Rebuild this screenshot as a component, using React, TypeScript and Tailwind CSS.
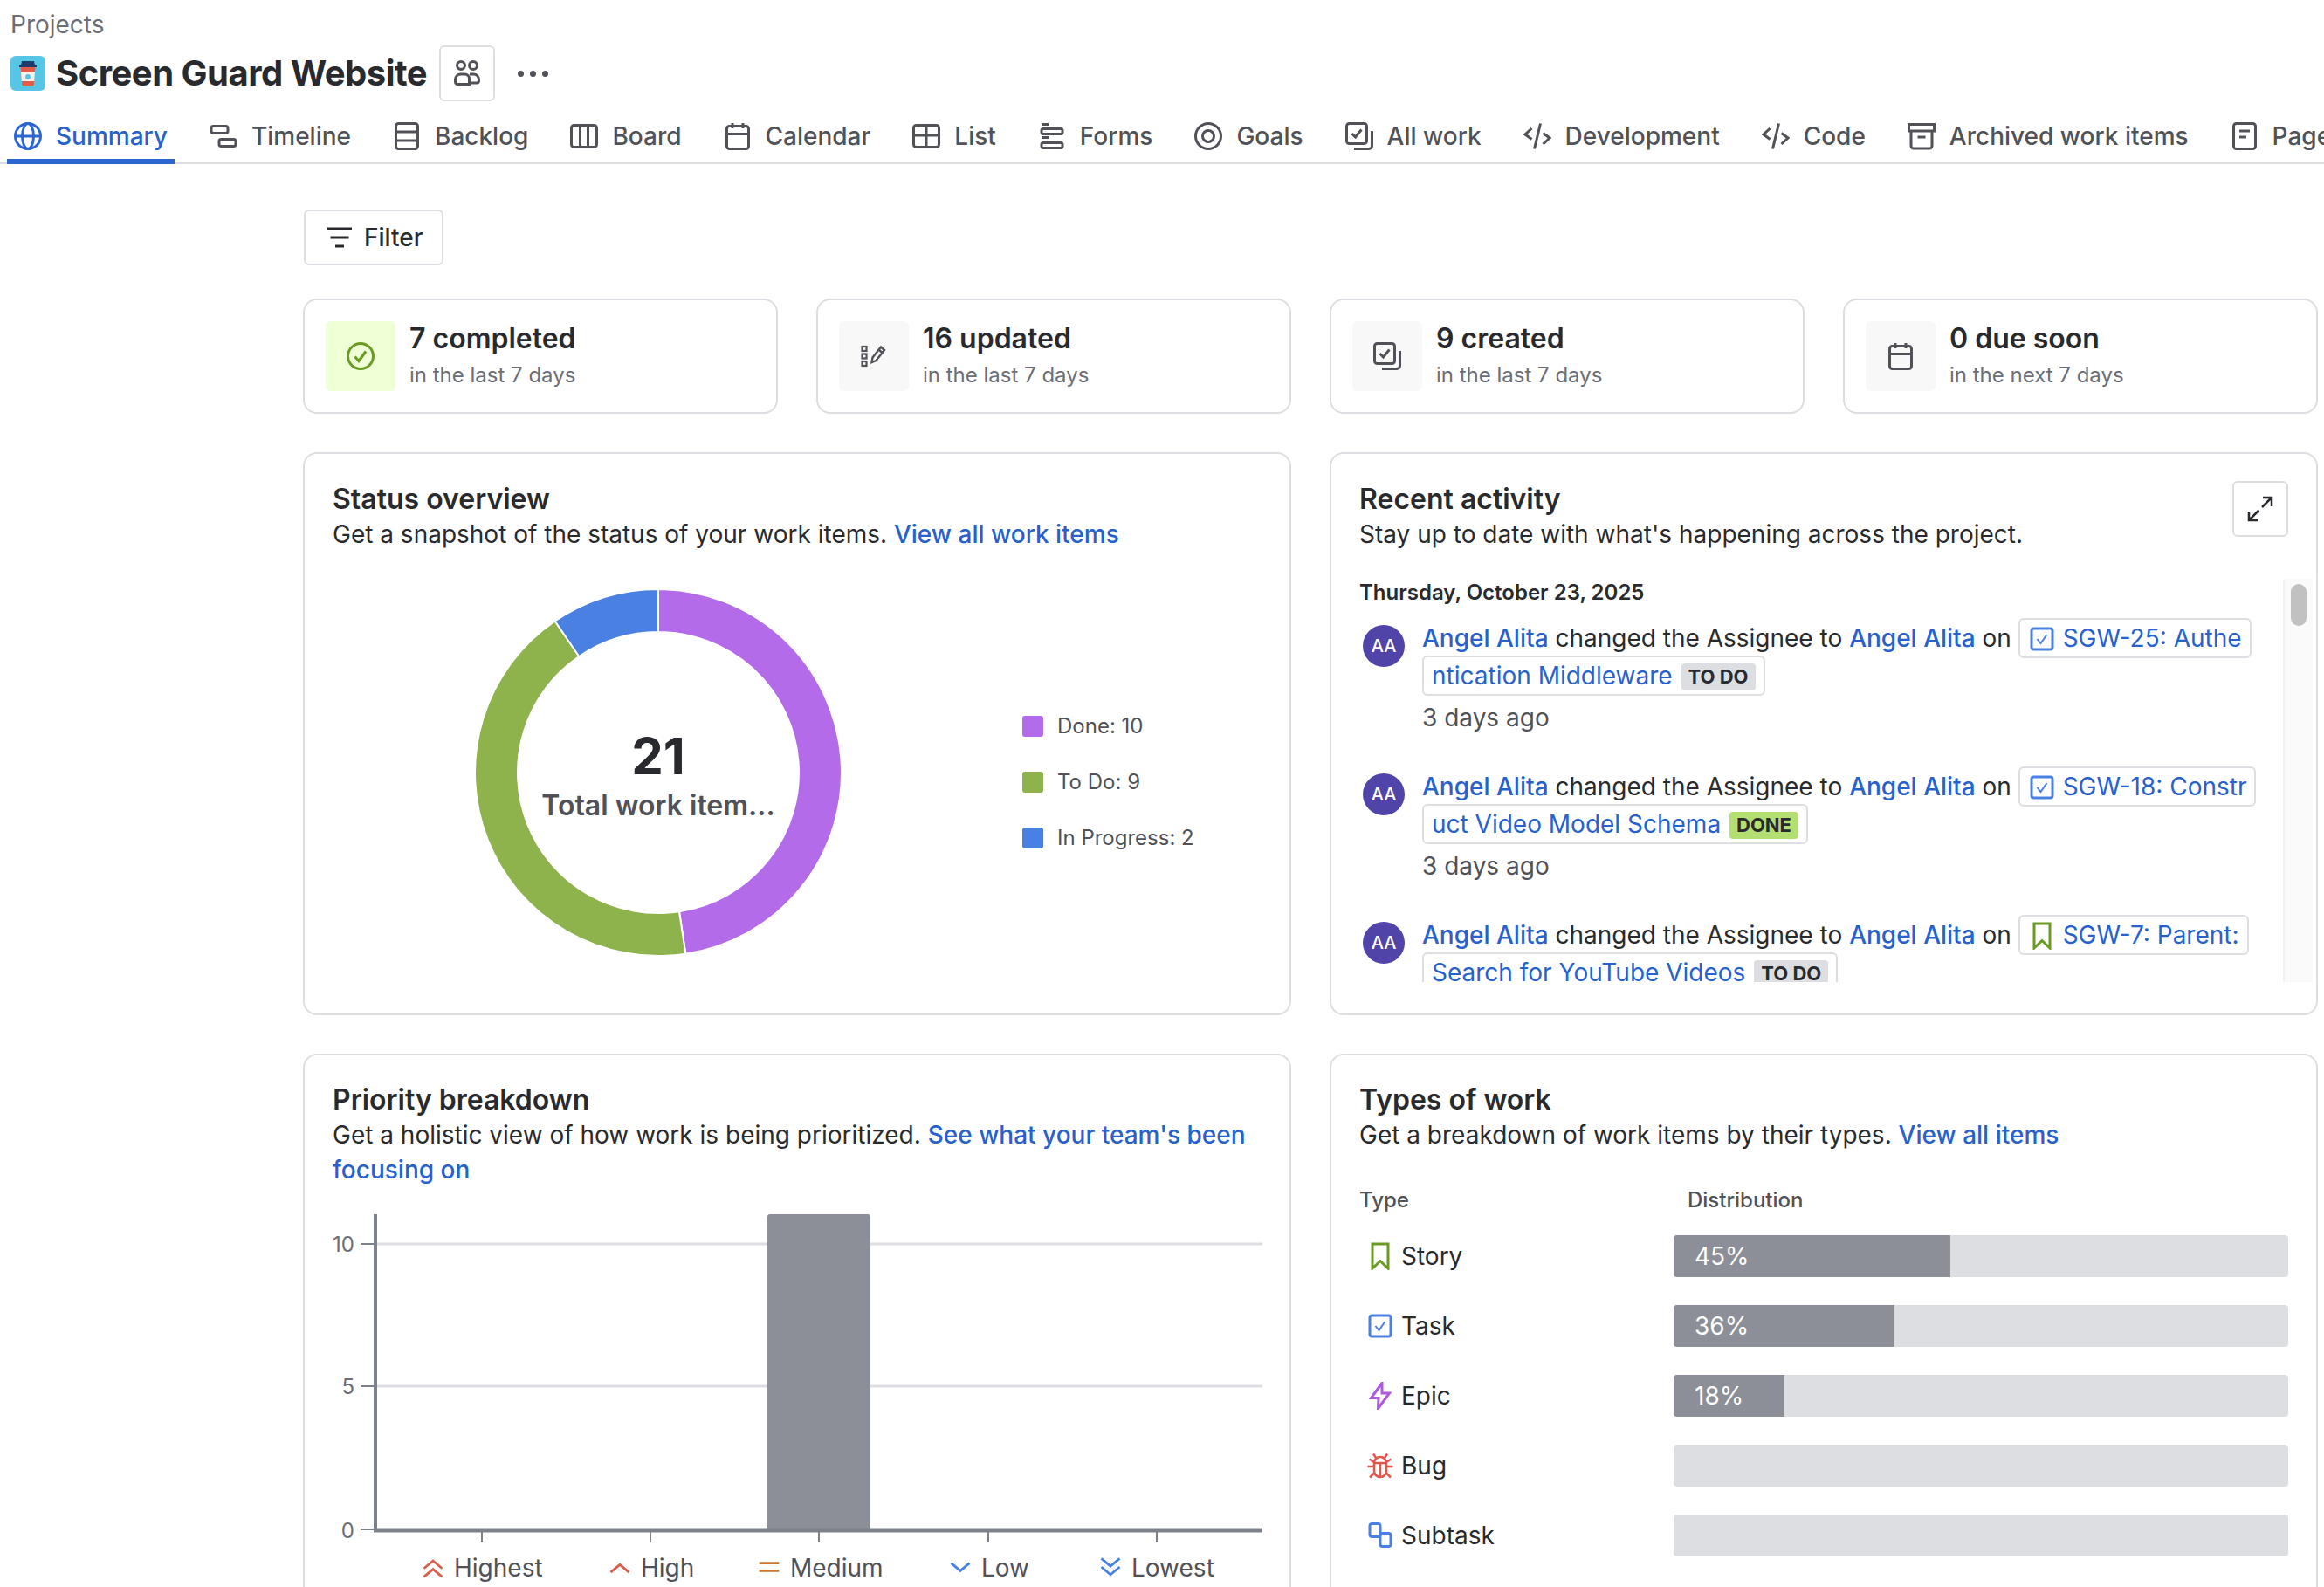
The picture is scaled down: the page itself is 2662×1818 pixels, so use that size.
import type { ReactNode } from "react";

const Ico = ({ children, className = "text-[#505258]", size = 32 }: { children: ReactNode; className?: string; size?: number }) => (
  <svg width={size} height={size} viewBox="0 0 16 16" fill="none" stroke="currentColor" strokeWidth="1.5" className={`shrink-0 ${className}`}>
    {children}
  </svg>
);

const GlobeI = () => (<><circle cx="8" cy="8" r="7.25" /><ellipse cx="8" cy="8" rx="3.25" ry="7.25" /><path d="M.75 8h14.5" /></>);
const TimelineI = () => (<><rect x="1" y="2.25" width="9.5" height="4" rx="1.25" /><rect x="5.5" y="9.75" width="9.5" height="4" rx="1.25" /></>);
const BacklogI = () => (<><rect x="1.75" y=".75" width="12.5" height="14.5" rx="1.5" /><path d="M1.75 5.5h12.5M1.75 10.5h12.5" /></>);
const BoardI = () => (<><rect x=".75" y="1.75" width="14.5" height="12.5" rx="1.5" /><path d="M5.75 1.75v12.5M10.25 1.75v12.5" /></>);
const CalendarI = () => (<><rect x="1.75" y="2.25" width="12.5" height="13" rx="1.5" /><path d="M1.75 6.75h12.5M5 .5v3M11 .5v3" /></>);
const ListI = () => (<><rect x=".75" y="1.75" width="14.5" height="12.5" rx="1.5" /><path d="M.75 7.5h14.5M8 1.75v12.5" /></>);
const FormsI = () => (<><path d="M2 1.25h4M2 8.75h4" /><rect x="2" y="3.75" width="12" height="3" rx="1" /><rect x="2" y="11.75" width="12" height="3" rx="1" /></>);
const GoalsI = () => (<><circle cx="8" cy="8" r="7.25" /><circle cx="8" cy="8" r="3.25" /></>);
const AllWorkI = () => (<><rect x=".75" y=".75" width="11.5" height="11.5" rx="1.5" /><path d="M3.75 6.5l2 2 3.5-4.25M15.25 5v8.5a1.75 1.75 0 0 1-1.75 1.75H5" /></>);
const CodeI = () => (<path d="M4.75 3.5L1 7l3.75 2.75M11.25 6.25L15 9l-3.75 3.5M9.75 .75L6.25 15.25" />);
const ArchiveI = () => (<><rect x=".75" y="1.25" width="14.5" height="3.75" /><path d="M2 5v8.5c0 .8.7 1.5 1.5 1.5h9c.8 0 1.5-.7 1.5-1.5V5M5.75 8.5h4.5" /></>);
const PageI = () => (<><rect x="1.75" y=".75" width="12.5" height="14.5" rx="1.5" /><path d="M5 5h6M5 8.5h4" /></>);
const PeopleI = () => (<><circle cx="4.5" cy="3.5" r="2.25" /><circle cx="11.5" cy="3.5" r="2.25" /><path d="M1.25 13v-1.5a3 3 0 0 1 3-3h2.5a2.5 2.5 0 0 1 2.5 2.5v3.25H2.5A1.25 1.25 0 0 1 1.25 13zM9.25 13.5h4.25c.7 0 1.25-.55 1.25-1.25v-.75a3 3 0 0 0-3-3H9.5" /></>);
const BookmarkI = () => (<path d="M3.5 1h9v14L8 10.75 3.5 15z" />);
const TaskI = () => (<><rect x="2" y="2" width="12" height="12" rx="1.25" /><path d="M5.25 8l2 2.5L10.75 5.5" strokeWidth="1" /></>);
const EpicI = () => (<path d="M9 .75L2.75 9.25H7L6.75 15.25 13.25 6.5H9z" />);
const BugI = () => (<><path d="M4.5 6.5c0-2 1.5-3.5 3.5-3.5s3.5 1.5 3.5 3.5V11c0 2-1.5 3.5-3.5 3.5S4.5 13 4.5 11zM8 6.5v8M4.5 6.5h7" strokeWidth="1.25" /><path d="M5.5 3.5L4 1.25M10.5 3.5L12 1.25M4.5 8.5H.75M11.5 8.5h3.75M4.75 12L2 14.75M11.25 12L14 14.75M4.5 6L1.75 4.25M11.5 6l2.75-1.75" strokeWidth="1.25" /></>);
const SubtaskI = () => (<><rect x="2" y="1.25" width="6" height="7.5" rx="1.25" /><rect x="8" y="6.75" width="6" height="7.5" rx="1.25" /></>);

const tabs: { label: string; icon: ReactNode; active?: boolean }[] = [
  { label: "Summary", icon: <GlobeI />, active: true },
  { label: "Timeline", icon: <TimelineI /> },
  { label: "Backlog", icon: <BacklogI /> },
  { label: "Board", icon: <BoardI /> },
  { label: "Calendar", icon: <CalendarI /> },
  { label: "List", icon: <ListI /> },
  { label: "Forms", icon: <FormsI /> },
  { label: "Goals", icon: <GoalsI /> },
  { label: "All work", icon: <AllWorkI /> },
  { label: "Development", icon: <CodeI /> },
  { label: "Code", icon: <CodeI /> },
  { label: "Archived work items", icon: <ArchiveI /> },
  { label: "Pages", icon: <PageI /> },
];

const stats: { title: string; sub: string; icon: ReactNode; green?: boolean }[] = [
  {
    title: "7 completed",
    sub: "in the last 7 days",
    green: true,
    icon: (
      <Ico className="text-[#6a9a23]">
        <circle cx="8" cy="8" r="7.25" />
        <path d="M4.75 8.25l2.25 2.5 4-5.5" />
      </Ico>
    ),
  },
  {
    title: "16 updated",
    sub: "in the last 7 days",
    icon: (
      <Ico>
        <rect x="1.25" y="2.5" width="2.5" height="2.5" strokeWidth="1.1" />
        <rect x="1.25" y="6.75" width="2.5" height="2.5" strokeWidth="1.1" />
        <rect x="1.25" y="11" width="2.5" height="2.5" strokeWidth="1.1" />
        <path d="M6.75 11.5l.5-2.75 4.75-6 2 1.75-4.75 6zM10.75 4.25l2 1.75" strokeWidth="1.2" />
      </Ico>
    ),
  },
  { title: "9 created", sub: "in the last 7 days", icon: <Ico><AllWorkI /></Ico> },
  { title: "0 due soon", sub: "in the next 7 days", icon: <Ico><CalendarI /></Ico> },
];

const legend = [
  { label: "Done: 10", color: "bg-[#b46be9]" },
  { label: "To Do: 9", color: "bg-[#8eb34d]" },
  { label: "In Progress: 2", color: "bg-[#4a80e2]" },
];

const activity = [
  { icon: <Ico className="inline-block text-[#4a80e2] align-[-7px]"><TaskI /></Ico>, text: "SGW-25: Authentication Middleware", status: "TO DO", done: false },
  { icon: <Ico className="inline-block text-[#4a80e2] align-[-7px]"><TaskI /></Ico>, text: "SGW-18: Construct Video Model Schema", status: "DONE", done: true },
  { icon: <Ico className="inline-block text-[#6a9a23] align-[-7px]"><BookmarkI /></Ico>, text: "SGW-7: Parent: Search for YouTube Videos", status: "TO DO", done: false },
];

const workTypes: { label: string; pct?: number; width: string; icon: ReactNode }[] = [
  { label: "Story", pct: 45, width: "w-[45%]", icon: <Ico className="text-[#6a9a23]"><BookmarkI /></Ico> },
  { label: "Task", pct: 36, width: "w-[36%]", icon: <Ico className="text-[#4a80e2]"><TaskI /></Ico> },
  { label: "Epic", pct: 18, width: "w-[18%]", icon: <Ico className="text-[#af59e1]"><EpicI /></Ico> },
  { label: "Bug", width: "w-0", icon: <Ico className="text-[#e2574c]"><BugI /></Ico> },
  { label: "Subtask", width: "w-0", icon: <Ico className="text-[#4a80e2]"><SubtaskI /></Ico> },
];

// donut arc between two fractions of the circle, starting at 12 o'clock
const arc = (from: number, to: number, R = 210, r = 161) => {
  const p = (f: number, rad: number) => {
    const a = f * 2 * Math.PI;
    return `${(220 + rad * Math.sin(a)).toFixed(2)} ${(220 - rad * Math.cos(a)).toFixed(2)}`;
  };
  const large = to - from > 0.5 ? 1 : 0;
  return `M${p(from, R)}A${R} ${R} 0 ${large} 1 ${p(to, R)}L${p(to, r)}A${r} ${r} 0 ${large} 0 ${p(from, r)}Z`;
};

const Donut = () => (
  <svg width="440" height="440" viewBox="0 0 440 440" className="ml-[153px] mt-[33px] shrink-0">
    <path d={arc(0, 10 / 21)} fill="#b46be9" stroke="#fff" strokeWidth="2" />
    <path d={arc(10 / 21, 19 / 21)} fill="#8eb34d" stroke="#fff" strokeWidth="2" />
    <path d={arc(19 / 21, 1)} fill="#4a80e2" stroke="#fff" strokeWidth="2" />
    <text x="220" y="222" textAnchor="middle" fontSize="58" fontWeight="700" fill="#292a2e">21</text>
    <text x="220" y="269" textAnchor="middle" fontSize="32" fontWeight="600" fill="#505258">Total work item...</text>
  </svg>
);

const PriorityChart = () => {
  const labels = [
    { x: 138, label: "Highest", ix: 100, color: "#d9604f", d: "M2 9l6-5 6 5M2 14.5l6-5 6 5" },
    { x: 352, label: "High", ix: 314, color: "#d9604f", d: "M2 11.5l6-5 6 5" },
    { x: 523, label: "Medium", ix: 485, color: "#c9772e", d: "M1.5 5.5h13M1.5 10.5h13" },
    { x: 742, label: "Low", ix: 704, color: "#4a80e2", d: "M2 5.5l6 5 6-5" },
    { x: 914, label: "Lowest", ix: 876, color: "#4a80e2", d: "M2 2.5l6 5 6-5M2 8l6 5 6-5" },
  ];
  return (
    <svg width="1064" height="430" viewBox="0 0 1064 430" className="mt-[31px] ml-[1px] block">
      <path d="M48 34H1064M48 197H1064" stroke="#dddee1" strokeWidth="3" />
      <path d="M497 362V3a3 3 0 0 1 3-3H612a3 3 0 0 1 3 3V362z" fill="#8c8f97" />
      <path d="M48 0V364" stroke="#7d818a" strokeWidth="4" fill="none" />
      <path d="M31 34H48M31 197H48M31 361H48" stroke="#7d818a" strokeWidth="2" fill="none" />
      <path d="M46 362H1064" stroke="#7d818a" strokeWidth="5" />
      <path d="M170 364V376M363 364V376M556 364V376M750 364V376M943 364V376" stroke="#7d818a" strokeWidth="2" />
      <g fontSize="24" fill="#6b6e76" textAnchor="end">
        <text x="24" y="43">10</text>
        <text x="24" y="206">5</text>
        <text x="24" y="371">0</text>
      </g>
      {labels.map((l) => (
        <g key={l.label}>
          <svg x={l.ix} y="390" width="28" height="28" viewBox="0 0 16 16" fill="none" stroke={l.color} strokeWidth="1.6">
            <path d={l.d} />
          </svg>
          <text x={l.x} y="415" fontSize="28" fill="#505258">{l.label}</text>
        </g>
      ))}
    </svg>
  );
};

const Panel = ({ children, className = "" }: { children: ReactNode; className?: string }) => (
  <div className={`border-2 border-[#dddee1] rounded-[16px] px-[32px] pb-[32px] min-w-0 ${className}`}>{children}</div>
);

const PanelHead = ({ title, children }: { title: string; children: ReactNode }) => (
  <div>
    <h2 className="text-[32px] leading-[36px] font-semibold text-[#292a2e]">{title}</h2>
    <p className="text-[28px] leading-[40px] mt-[2px] text-[#292a2e]">{children}</p>
  </div>
);

const Link = ({ children }: { children: ReactNode }) => <span className="text-[#2762cc] font-medium">{children}</span>;

export default function App() {
  return (
    <div className="w-[2662px] h-[1818px] overflow-hidden bg-white font-['Inter',sans-serif] text-[#292a2e]">
      <div className="pl-[12px] pt-[8px]">
        <div className="text-[28px] leading-[40px] text-[#6b6e76]">Projects</div>
        <div className="flex items-center h-[64px] mt-[4px]">
          <svg width="40" height="40" viewBox="0 0 40 40" className="shrink-0">
            <rect width="40" height="40" rx="6" fill="#57c5e6" />
            <path d="M12 11l1-5h14l1 5z" fill="#1f3d6b" />
            <path d="M10 10h20v3H10z" fill="#1f3d6b" />
            <path d="M11.5 13h17l-2 22h-13z" fill="#e25b4b" />
            <path d="M12 19h16l-.8 10H12.8z" fill="#f3f1ea" />
            <circle cx="20" cy="24" r="3" fill="#57c5e6" />
          </svg>
          <h1 className="ml-[12px] text-[40px] font-bold tracking-[-0.5px] leading-[48px] text-[#292a2e] w-[439px] whitespace-nowrap">Screen Guard Website</h1>
          <button className="w-[64px] h-[64px] border-2 border-[#dddee1] rounded-[6px] flex items-center justify-center">
            <Ico><PeopleI /></Ico>
          </button>
          <div className="ml-[26px] flex gap-[7px]">
            <span className="w-[7px] h-[7px] rounded-full bg-[#505258]" />
            <span className="w-[7px] h-[7px] rounded-full bg-[#505258]" />
            <span className="w-[7px] h-[7px] rounded-full bg-[#505258]" />
          </div>
        </div>
      </div>

      <nav className="flex gap-[32px] pl-[8px] h-[64px] mt-[8px] shadow-[inset_0_-2px_0_#dddee1] overflow-hidden">
        {tabs.map((t) => (
          <div
            key={t.label}
            className={`flex items-center gap-[16px] px-[8px] h-[64px] shrink-0 border-b-[6px] pt-[6px] text-[28px] font-medium ${
              t.active ? "border-[#2d66d0] text-[#2762cc]" : "border-transparent text-[#505258]"
            }`}
          >
            <Ico className={t.active ? "text-[#2d66d0]" : "text-[#505258]"}>{t.icon}</Ico>
            {t.label}
          </div>
        ))}
      </nav>

      <main className="pl-[347px] pr-[7px]">
        <button className="ml-[1px] mt-[52px] flex items-center gap-[12px] h-[64px] w-[160px] pl-[23px] border-2 border-[#dddee1] rounded-[6px] text-[28px] font-medium text-[#292a2e]">
          <Ico className="text-[#292a2e]"><path d="M1 3h14M2.75 8h10.5M5.5 13h5" strokeWidth="1.6" /></Ico>
          Filter
        </button>

        <div className="grid grid-cols-4 gap-[44px] mt-[38px]">
          {stats.map((s) => (
            <div key={s.title} className="h-[132px] border-2 border-[#dddee1] rounded-[16px] flex items-center px-[24px] gap-[16px]">
              <div className={`w-[80px] h-[80px] rounded-[6px] flex items-center justify-center ${s.green ? "bg-[#efffd6]" : "bg-[#f8f8f8]"}`}>{s.icon}</div>
              <div className="mb-[3px]">
                <div className="text-[32px] leading-[40px] font-semibold text-[#292a2e]">{s.title}</div>
                <div className="text-[24px] leading-[32px] mt-[6px] text-[#6b6e76]">{s.sub}</div>
              </div>
            </div>
          ))}
        </div>

        <div className="grid grid-cols-2 gap-[44px] mt-[44px]">
          <Panel className="h-[645px] pt-[34px]">
            <PanelHead title="Status overview">
              Get a snapshot of the status of your work items. <Link>View all work items</Link>
            </PanelHead>
            <div className="flex items-center">
              <Donut />
              <div className="ml-[197px] mt-[54px] flex flex-col gap-[24px]">
                {legend.map((l) => (
                  <div key={l.label} className="flex items-center gap-[16px] h-[40px] text-[24px] text-[#505258]">
                    <span className={`w-[24px] h-[24px] rounded-[3px] ${l.color}`} />
                    {l.label}
                  </div>
                ))}
              </div>
            </div>
          </Panel>

          <Panel className="h-[645px] pt-[34px] !pb-0 !pr-0">
            <div className="flex justify-between pr-[32px]">
              <PanelHead title="Recent activity">Stay up to date with what's happening across the project.</PanelHead>
              <button className="w-[64px] h-[64px] -mt-[3px] border-2 border-[#dddee1] rounded-[6px] flex items-center justify-center">
                <Ico className="text-[#292a2e]"><path d="M9.5 1.5h5v5M14.5 1.5L9 7M6.5 14.5h-5v-5M1.5 14.5L7 9" strokeWidth="1.25" /></Ico>
              </button>
            </div>
            <div className="relative h-[462px] mt-[31px] overflow-hidden">
              <div className="w-[1023px]">
                <div className="text-[24px] leading-[32px] font-semibold text-[#292a2e]">Thursday, October 23, 2025</div>
                <div className="mt-[15px] flex flex-col gap-[38px]">
                  {activity.map((a) => (
                    <div key={a.text} className="flex">
                      <div className="ml-[4px] mt-[6px] w-[48px] h-[48px] rounded-full bg-[#5144a8] text-white text-[20px] font-medium flex items-center justify-center shrink-0">AA</div>
                      <div className="ml-[20px] min-w-0 flex-1">
                        <p className="text-[28px] leading-[43px]">
                          <Link>Angel Alita</Link> changed the Assignee to <Link>Angel Alita</Link> on{" "}
                          <span className="break-all border-2 border-[#dddee1] rounded-[6px] box-decoration-clone px-[9px] py-[4px] text-[#2762cc]">
                            {a.icon} {a.text}{" "}
                            <span className={`inline-block ml-[2px] h-[31px] leading-[31px] px-[8px] rounded-[4px] text-[22px] font-bold align-[1px] text-[#292a2e] break-normal whitespace-nowrap ${a.done ? "bg-[#b3df72]" : "bg-[#dddee1]"}`}>{a.status}</span>
                          </span>
                        </p>
                        <div className="text-[28px] leading-[40px] mt-[6px] text-[#505258]">3 days ago</div>
                      </div>
                    </div>
                  ))}
                </div>
              </div>
              <div className="absolute right-[4px] top-0 bottom-0 w-[34px] bg-[#fafafa] border-l-2 border-[#f0f0f0]">
                <div className="mt-[6px] ml-[7px] w-[18px] h-[48px] rounded-full bg-[#c1c1c1]" />
              </div>
            </div>
          </Panel>

          <Panel className="pt-[33px]">
            <PanelHead title="Priority breakdown">
              Get a holistic view of how work is being prioritized. <Link>See what your team's been focusing on</Link>
            </PanelHead>
            <PriorityChart />
          </Panel>

          <Panel className="pt-[33px]">
            <PanelHead title="Types of work">
              Get a breakdown of work items by their types. <Link>View all items</Link>
            </PanelHead>
            <div className="flex mt-[39px] text-[24px] leading-[32px] font-medium text-[#505258]">
              <div className="w-[376px]">Type</div>
              <div>Distribution</div>
            </div>
            <div className="mt-[24px] flex flex-col gap-[32px]">
              {workTypes.map((w) => (
                <div key={w.label} className="flex items-center h-[48px]">
                  <div className="w-[360px] pl-[8px] flex items-center gap-[8px] text-[28px] text-[#292a2e]">
                    {w.icon}
                    {w.label}
                  </div>
                  <div className="flex-1 h-[48px] rounded-[4px] bg-[#dddee1] overflow-hidden">
                    {w.pct !== undefined && (
                      <div className={`h-full ${w.width} bg-[#8c8f97] pl-[24px] text-[28px] leading-[48px] text-white`}>{w.pct}%</div>
                    )}
                  </div>
                </div>
              ))}
            </div>
          </Panel>
        </div>
      </main>
    </div>
  );
}
